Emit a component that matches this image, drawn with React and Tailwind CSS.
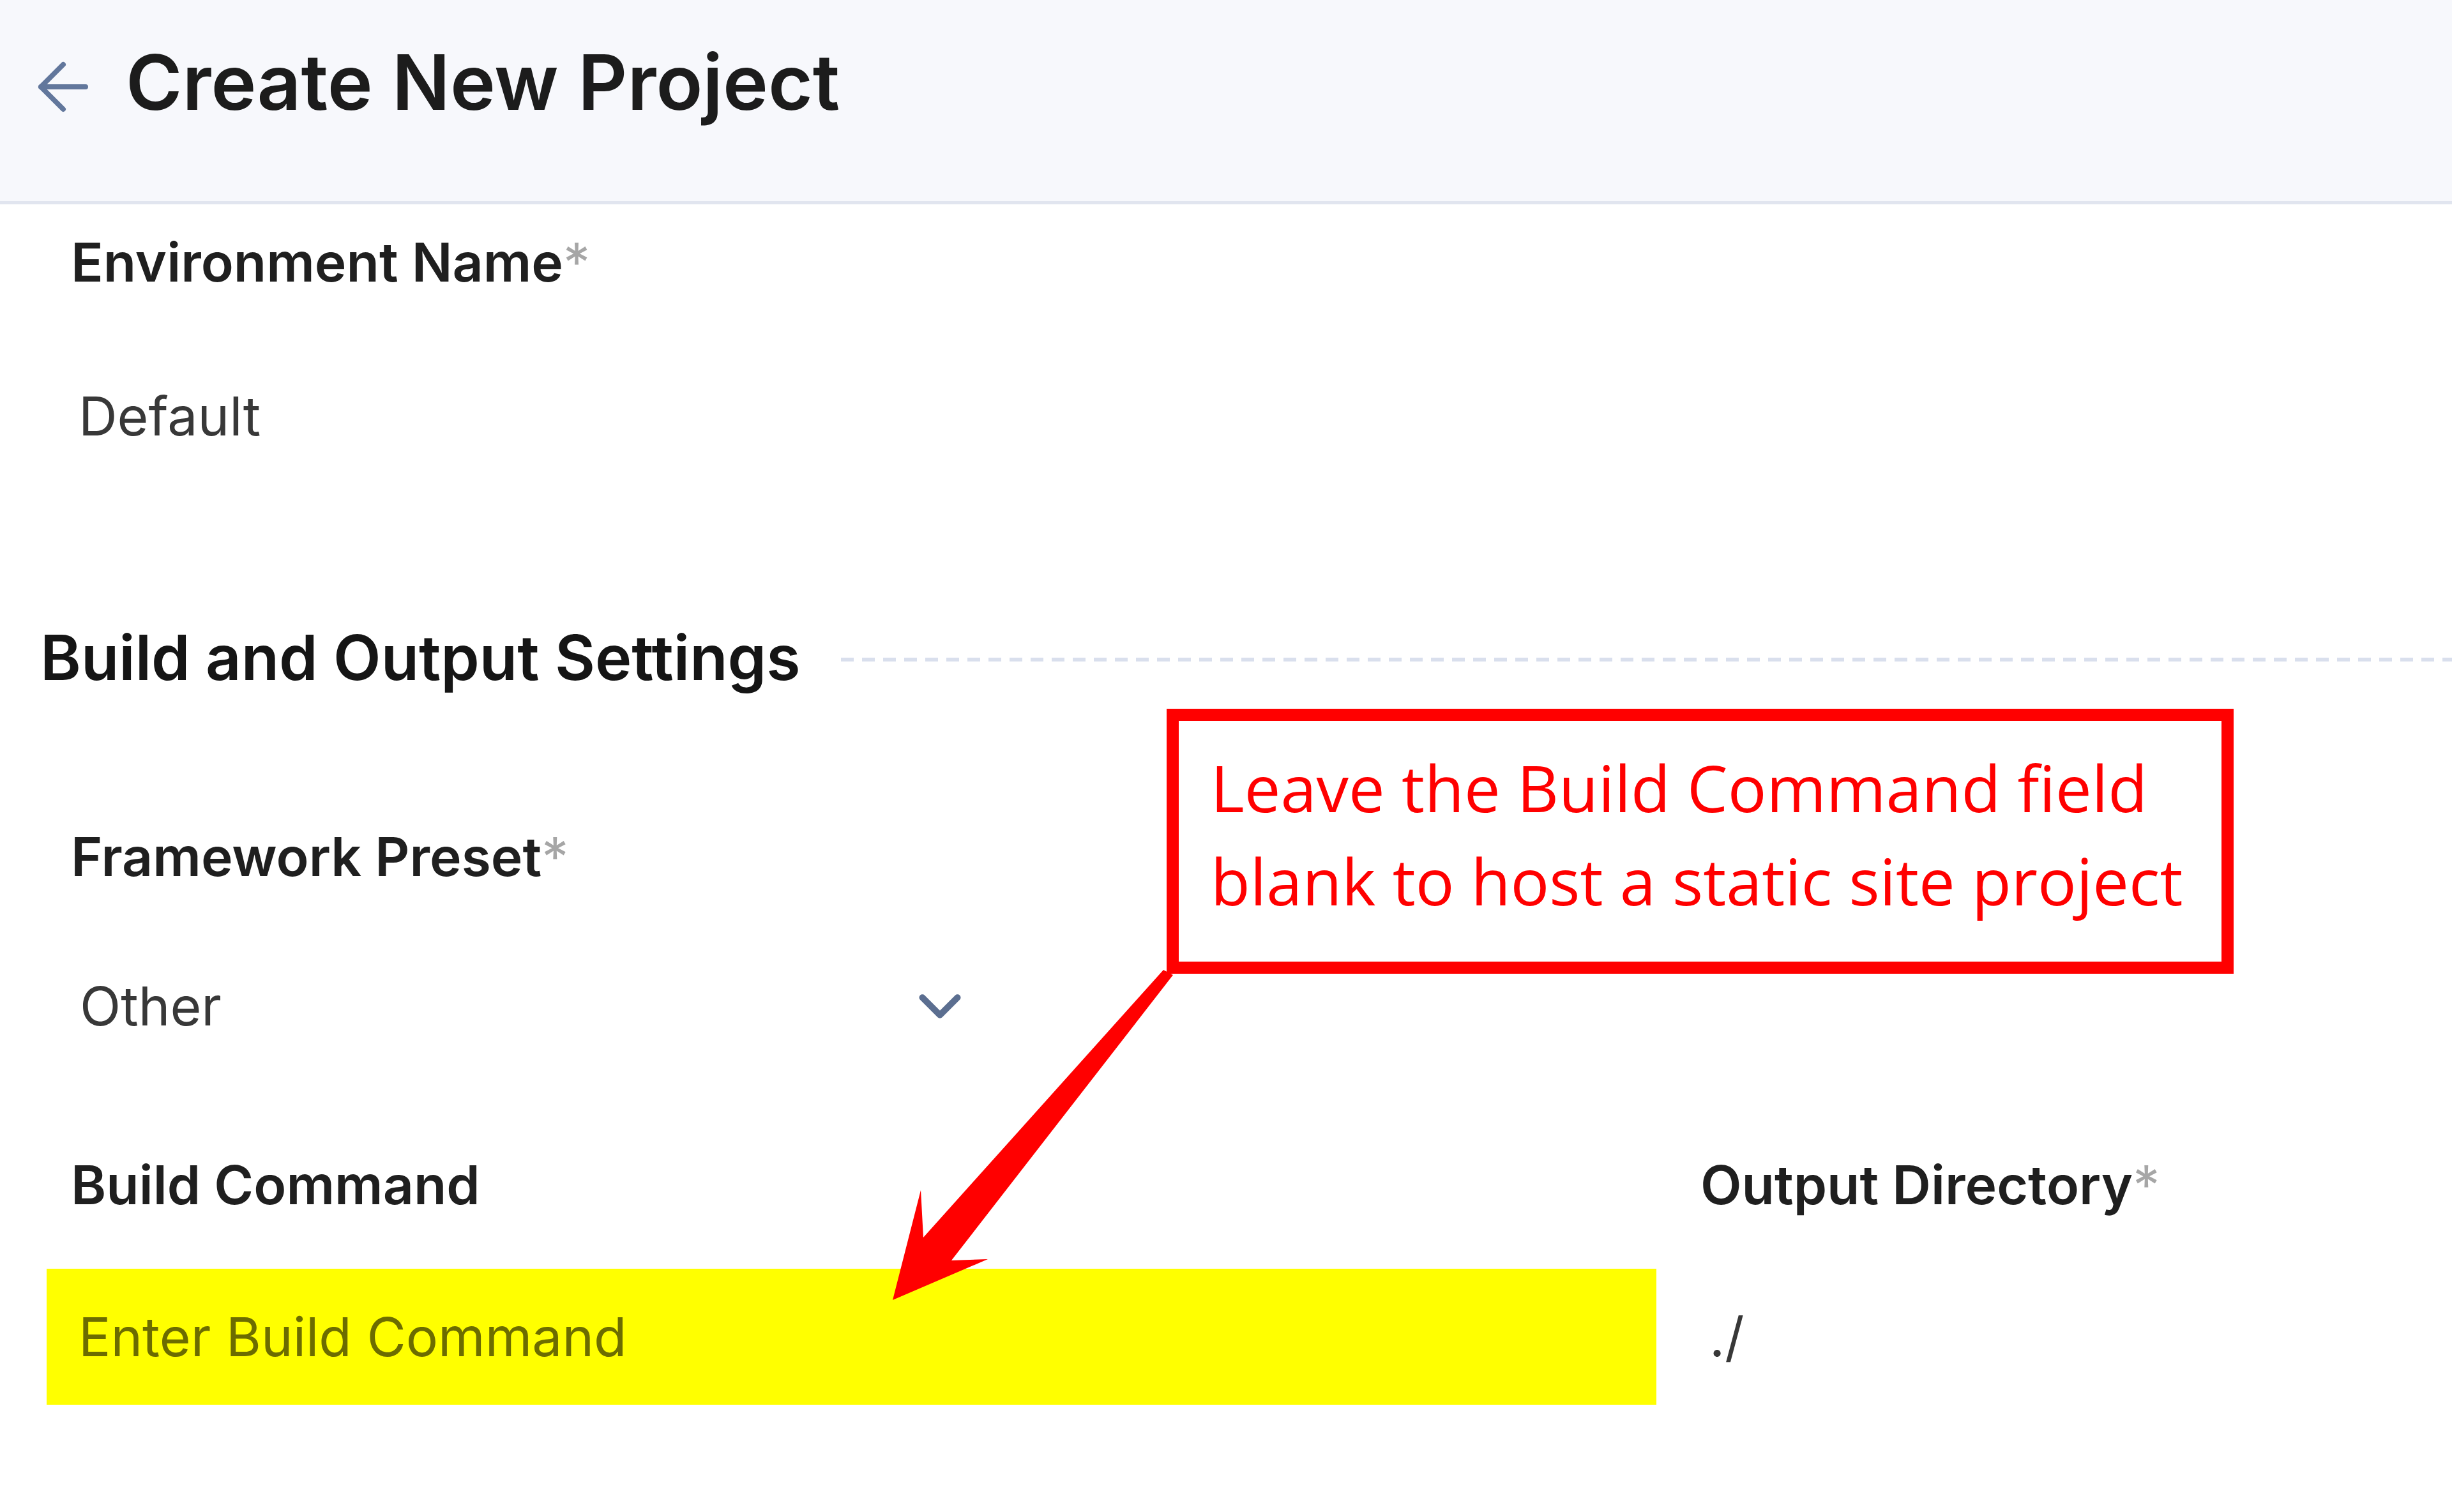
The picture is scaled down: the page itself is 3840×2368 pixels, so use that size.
import React from "react";
import { ArrowLeft, ChevronDown } from "lucide-react";

const labelClass = "pl-[48px] h-[104px] leading-[104px] text-[84px] font-semibold text-[#1f1f1f] whitespace-nowrap";
const fieldClass = "ml-[10px] h-[213px] px-[50px] text-[84px] text-[#383838] bg-transparent outline-none";

function Label({ text, required }) {
  return (
    <div className={labelClass}>
      {text}
      {required && <span className="font-normal text-[#a6a6a6]">*</span>}
    </div>
  );
}

// red callout pointer, drawn in page coordinates
function CalloutArrow() {
  return (
    <svg
      className="absolute left-0 top-0 pointer-events-none"
      width="3840"
      height="2368"
      viewBox="0 0 3840 2368"
    >
      <polygon
        fill="#ff0000"
        points="1822,1519 1837,1527 1490,1974 1547,1972 1398,2036 1442,1864 1446,1938"
      />
    </svg>
  );
}

export default function App() {
  return (
    <div className="relative min-h-screen overflow-hidden bg-white font-['Inter',sans-serif]">
      <header className="h-[320px] border-b-[5px] border-[#e1e5ef] bg-[#f7f8fc] pl-[39px] pt-[56px]">
        <div className="flex h-[145px] items-center gap-[38px]">
          <ArrowLeft size={120} strokeWidth={1.6} className="mt-[15px] text-[#62779c]" />
          <h1 className="text-[120px] leading-[145px] font-semibold text-[#1c1c1c] whitespace-nowrap">
            Create New Project
          </h1>
        </div>
      </header>

      <main className="pl-[63px] pt-[39px]">
        <Label text="Environment Name" required />
        <input
          className={fieldClass + " mt-[82px] w-[2521px]"}
          defaultValue="Default"
          readOnly
        />

        <div className="mt-[212px] flex items-center">
          <h2 className="text-[97px] leading-[119px] font-semibold text-[#151515] whitespace-nowrap">
            Build and Output Settings
          </h2>
          <div className="ml-[64px] mt-[6px] h-[6px] flex-1 bg-[repeating-linear-gradient(to_right,#d9dfed_0_20px,transparent_20px_33px)]" />
        </div>

        <div className="mt-[201px]">
          <Label text="Framework Preset" required />
          <div className="ml-[10px] mt-[75px] flex h-[213px] w-[1474px] items-center justify-between pl-[52px] pr-[20px] text-[84px] text-[#383838]">
            <span>Other</span>
            <ChevronDown size={110} strokeWidth={2.2} className="text-[#5b6e90]" />
          </div>
        </div>

        <div className="mt-[122px] flex gap-[21px]">
          <div className="w-[2531px] shrink-0">
            <Label text="Build Command" />
            <input
              className="ml-[10px] mt-[79px] h-[213px] w-[2521px] bg-[#ffff00] px-[50px] text-[84px] text-[#383838] outline-none placeholder:text-[#6c6c00]"
              placeholder="Enter Build Command"
            />
          </div>
          <div className="flex-1">
            <Label text="Output Directory" required />
            <input
              className="mt-[79px] h-[213px] w-full bg-transparent pl-[62px] text-[84px] text-[#383838] outline-none"
              defaultValue="./"
              readOnly
            />
          </div>
        </div>
      </main>

      <div className="absolute left-[1827px] top-[1110px] h-[415px] w-[1671px] border-[19px] border-[#ff0000] bg-white pl-[50px] pt-[31px] font-['Open_Sans',sans-serif] text-[101px] leading-[146px] text-[#ff0000] whitespace-nowrap">
        <div>Leave the Build Command field</div>
        <div>blank to host a static site project</div>
      </div>

      <CalloutArrow />
    </div>
  );
}
